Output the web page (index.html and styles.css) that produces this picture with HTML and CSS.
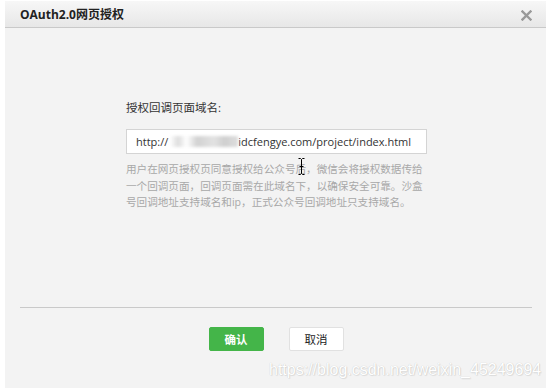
FILE: index.html
```html
<!DOCTYPE html>
<html lang="zh-CN">
<head>
    <meta charset="UTF-8">
    <title>OAuth2.0网页授权</title>
    <link rel="stylesheet" href="styles.css">
</head>
<body>
    <div class="dialog">
        <div class="dialog-head">
            <span class="dialog-title">OAuth2.0网页授权</span>
            <svg class="dialog-close" width="11" height="11" viewBox="0 0 11 11">
                <path d="M1.5 1.5l8 8M9.5 1.5l-8 8" stroke="#999" stroke-width="2.4" stroke-linecap="square"/>
            </svg>
        </div>
        <div class="dialog-body">
            <div class="field">
                <label class="field-label">授权回调页面域名:</label>
                <div class="field-input">http://<span class="masked"></span>idcfengye.com/project/index.html</div>
                <p class="field-tip">用户在网页授权页同意授权给公众号后，微信会将授权数据传给一个回调页面，回调页面需在此域名下，以确保安全可靠。沙盒号回调地址支持域名和ip，正式公众号回调地址只支持域名。</p>
            </div>
        </div>
        <div class="dialog-foot">
            <button class="btn btn-primary">确认</button>
            <button class="btn btn-default">取消</button>
        </div>
    </div>

    <!-- mouse cursor in the screenshot -->
    <svg class="ibeam" width="7" height="17" viewBox="0 0 7 17">
        <path d="M0.5 0.5h2l1 1 1-1h2M3.5 1.5v14M0.5 16.5h2l1-1 1 1h2M1.5 8.5h4" fill="none" stroke="#000" stroke-width="1"/>
    </svg>

    <div class="watermark">https://blog.csdn.net/weixin_45249694</div>
</body>
</html>
```

FILE: styles.css
```css
/* General styles */
body {
    margin: 0;
    padding: 0;
    background: #fff;
    font-family: "Open Sans", "Noto Sans CJK SC", sans-serif;
    color: #333;
    overflow: hidden;
}

.dialog {
    width: 541px;
    height: 387px;
    margin: 1px 0 0 5px;
    background: #f3f3f3;
}

.dialog-head {
    height: 26px;
    display: flex;
    align-items: center;
    justify-content: space-between;
    padding: 0 14px 0 15px;
    background: linear-gradient(#f7f7f7, #e7e7e7);
    border-bottom: 1px solid #c9c9c9;
}

.dialog-title {
    font-size: 12px;
    font-weight: bold;
    color: #222;
}

.dialog-close {
    display: block;
    margin-top: 2px;
}

.dialog-body {
    height: 279px;
    padding: 72px 0 0 121px;
    box-sizing: border-box;
}

.field {
    width: 301px;
}

.field-label {
    display: block;
    font-size: 11.5px;
    line-height: 16px;
    color: #333;
}

.field-input {
    margin-top: 13px;
    height: 25px;
    box-sizing: border-box;
    border: 1px solid #d4d4d4;
    background: #fff;
    padding-left: 9px;
    font-size: 11px;
    line-height: 23px;
    color: #333;
    white-space: nowrap;
}

.masked {
    display: inline-block;
    width: 68px;
    height: 11px;
    margin-left: 2px;
    vertical-align: -1px;
    background: linear-gradient(90deg, #fff 0%, #ddd 12%, #fff 24%, #d2d2d2 40%, #e2e2e2 65%, #cfcfcf 80%, #ddd 100%);
    filter: blur(1.5px);
}

.field-tip {
    margin: 7px 0 0;
    font-size: 10.6px;
    line-height: 16.7px;
    color: #a8a8a8;
}

.dialog-foot {
    margin: 0 14px 0 15px;
    border-top: 1px solid #c9c9c9;
    padding-top: 19px;
    display: flex;
    justify-content: center;
    gap: 25px;
}

.btn {
    width: 55px;
    height: 24px;
    padding: 0;
    border-radius: 2px;
    font-family: "Noto Sans CJK SC", sans-serif;
    font-size: 11.5px;
    cursor: pointer;
}

.btn-primary {
    background: #44b549;
    border: 1px solid #44b549;
    color: #fff;
    font-weight: bold;
}

.btn-default {
    background: #fff;
    border: 1px solid #e1e1e1;
    color: #222;
}

.ibeam {
    position: absolute;
    left: 298px;
    top: 158px;
}

.watermark {
    position: absolute;
    left: 269px;
    top: 360px;
    font-family: "Liberation Sans", Arial, sans-serif;
    font-size: 16px;
    line-height: 20px;
    color: #fff;
    text-shadow: 0 0 1px rgba(0, 0, 0, 0.22), 1px 1px 1px rgba(0, 0, 0, 0.08);
}
```
